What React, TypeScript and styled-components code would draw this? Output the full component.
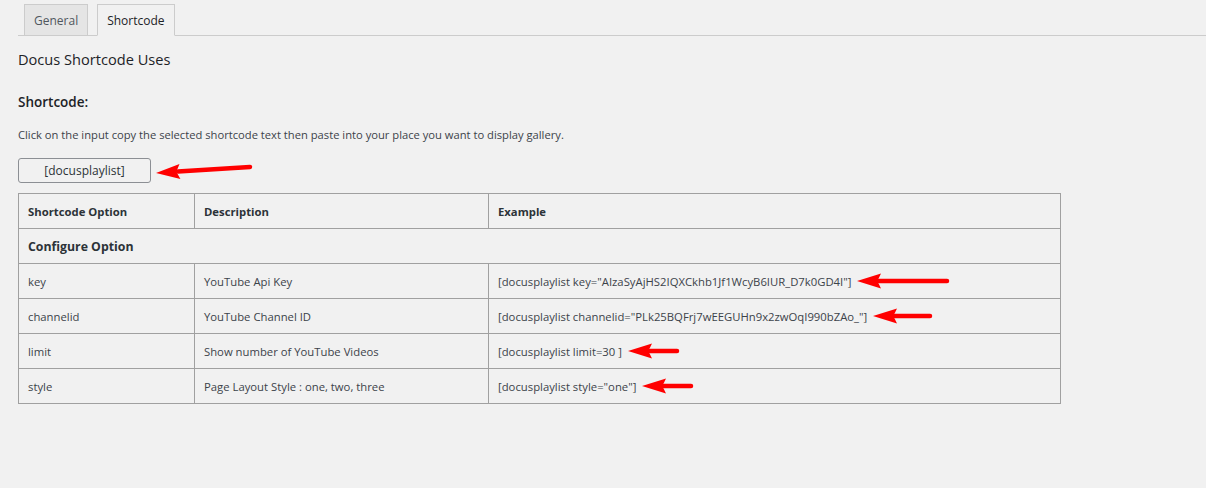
import React from "react";
import styled, { createGlobalStyle } from "styled-components";

const Global = createGlobalStyle`
  html, body { margin: 0; padding: 0; background: #f1f1f1; }
  body { font-family: "Open Sans", "Noto Sans", sans-serif; color: #3c434a; }
`;

const Page = styled.div`
  padding: 4px 0 0 18px;
`;

const TabBar = styled.nav`
  display: flex;
  align-items: flex-end;
  gap: 9px;
  padding-left: 6px;
  border-bottom: 1px solid #cccccc;
  height: 31px;
`;

const Tab = styled.a<{ $active?: boolean }>`
  box-sizing: border-box;
  display: flex;
  align-items: center;
  height: ${(p) => (p.$active ? "32px" : "31px")};
  margin-bottom: ${(p) => (p.$active ? "-1px" : "0")};
  padding: 0 9px;
  font-size: 12px;
  color: ${(p) => (p.$active ? "#1d2327" : "#50575e")};
  background: ${(p) => (p.$active ? "#f1f1f1" : "#e5e5e5")};
  border: 1px solid #cccccc;
  border-bottom: ${(p) => (p.$active ? "1px solid #f1f1f1" : "none")};
  text-decoration: none;
`;

const Title = styled.h2`
  margin: 13px 0 0;
  font-size: 14.6px;
  font-weight: 400;
  line-height: 20px;
  color: #1d2327;
`;

const SubTitle = styled.h3`
  margin: 23px 0 0;
  font-size: 13.5px;
  font-weight: 600;
  line-height: 20px;
  color: #1d2327;
`;

const Hint = styled.p`
  margin: 15px 0 0;
  font-size: 11.2px;
  line-height: 16px;
  color: #3c434a;
`;

const CodeRow = styled.div`
  display: flex;
  align-items: center;
  gap: 5px;
  margin-top: 13px;
`;

const CodeButton = styled.button`
  box-sizing: border-box;
  width: 133px;
  height: 25px;
  border: 1px solid #8c8f94;
  border-radius: 3px;
  background: #f1f1f1;
  font-family: inherit;
  font-size: 12px;
  color: #2c3338;
  padding: 0;
`;

const Table = styled.table`
  margin-top: 9px;
  width: 1043px;
  border-collapse: collapse;
  font-size: 11.3px;
  color: #3c434a;
`;

const Cell = styled.td<{ $head?: boolean }>`
  box-sizing: border-box;
  height: 35px;
  padding: 0 9px;
  border: 1px solid #a0a0a0;
  font-weight: ${(p) => (p.$head ? 700 : 400)};
  color: ${(p) => (p.$head ? "#2c3338" : "#3c434a")};
  white-space: nowrap;
  vertical-align: middle;
`;

const GroupCell = styled(Cell)`
  font-size: 12.3px;
`;

const Inline = styled.span`
  display: inline-flex;
  align-items: center;
  gap: 6px;
`;

type ArrowProps = { length: number; rise?: number; head?: number };

// Red pointer drawn leftwards: tip on the left, tail on the right.
const Arrow = ({ length, rise = 0, head = 24 }: ArrowProps) => {
  const h = 16;
  const pad = 3;
  const total = h + Math.abs(rise);
  const tipY = pad + h / 2 + (rise > 0 ? rise : 0);
  const tailY = tipY - rise;
  const ang = Math.atan2(tailY - tipY, length);
  const bx = head * Math.cos(ang);
  const by = head * Math.sin(ang);
  const nx = -Math.sin(ang) * 7.5;
  const ny = Math.cos(ang) * 7.5;
  return (
    <svg width={length + 4} height={total + pad * 2} viewBox={`0 0 ${length + 4} ${total + pad * 2}`}>
      <line
        x1={bx - 2}
        y1={tipY + by}
        x2={length}
        y2={tailY}
        stroke="#ff0000"
        strokeWidth={4.5}
        strokeLinecap="round"
      />
      <polygon
        points={`0,${tipY} ${bx + nx},${tipY + by + ny} ${bx * 0.85},${tipY + by * 0.85} ${bx - nx},${tipY + by - ny}`}
        fill="#ff0000"
      />
    </svg>
  );
};

const rows = [
  { opt: "key", desc: "YouTube Api Key", ex: '[docusplaylist key="AIzaSyAjHS2IQXCkhb1Jf1WcyB6IUR_D7k0GD4I"]', arrow: 90 },
  { opt: "channelid", desc: "YouTube Channel ID", ex: '[docusplaylist channelid="PLk25BQFrj7wEEGUHn9x2zwOqI990bZAo_"]', arrow: 57 },
  { opt: "limit", desc: "Show number of YouTube Videos", ex: "[docusplaylist limit=30 ]", arrow: 49 },
  { opt: "style", desc: "Page Layout Style : one, two, three", ex: '[docusplaylist style="one"]', arrow: 49 },
];

export default function App() {
  return (
    <Page>
      <Global />
      <TabBar>
        <Tab href="#">General</Tab>
        <Tab href="#" $active>Shortcode</Tab>
      </TabBar>
      <Title>Docus Shortcode Uses</Title>
      <SubTitle>Shortcode:</SubTitle>
      <Hint>Click on the input copy the selected shortcode text then paste into your place you want to display gallery.</Hint>
      <CodeRow>
        <CodeButton>[docusplaylist]</CodeButton>
        <Arrow length={94} rise={6} />
      </CodeRow>
      <Table>
        <colgroup>
          <col style={{ width: 176 }} />
          <col style={{ width: 294 }} />
          <col />
        </colgroup>
        <tbody>
          <tr>
            <Cell $head>Shortcode Option</Cell>
            <Cell $head>Description</Cell>
            <Cell $head>Example</Cell>
          </tr>
          <tr>
            <GroupCell $head colSpan={3}>Configure Option</GroupCell>
          </tr>
          {rows.map((r) => (
            <tr key={r.opt}>
              <Cell>{r.opt}</Cell>
              <Cell>{r.desc}</Cell>
              <Cell>
                <Inline>
                  {r.ex}
                  <Arrow length={r.arrow} />
                </Inline>
              </Cell>
            </tr>
          ))}
        </tbody>
      </Table>
    </Page>
  );
}
